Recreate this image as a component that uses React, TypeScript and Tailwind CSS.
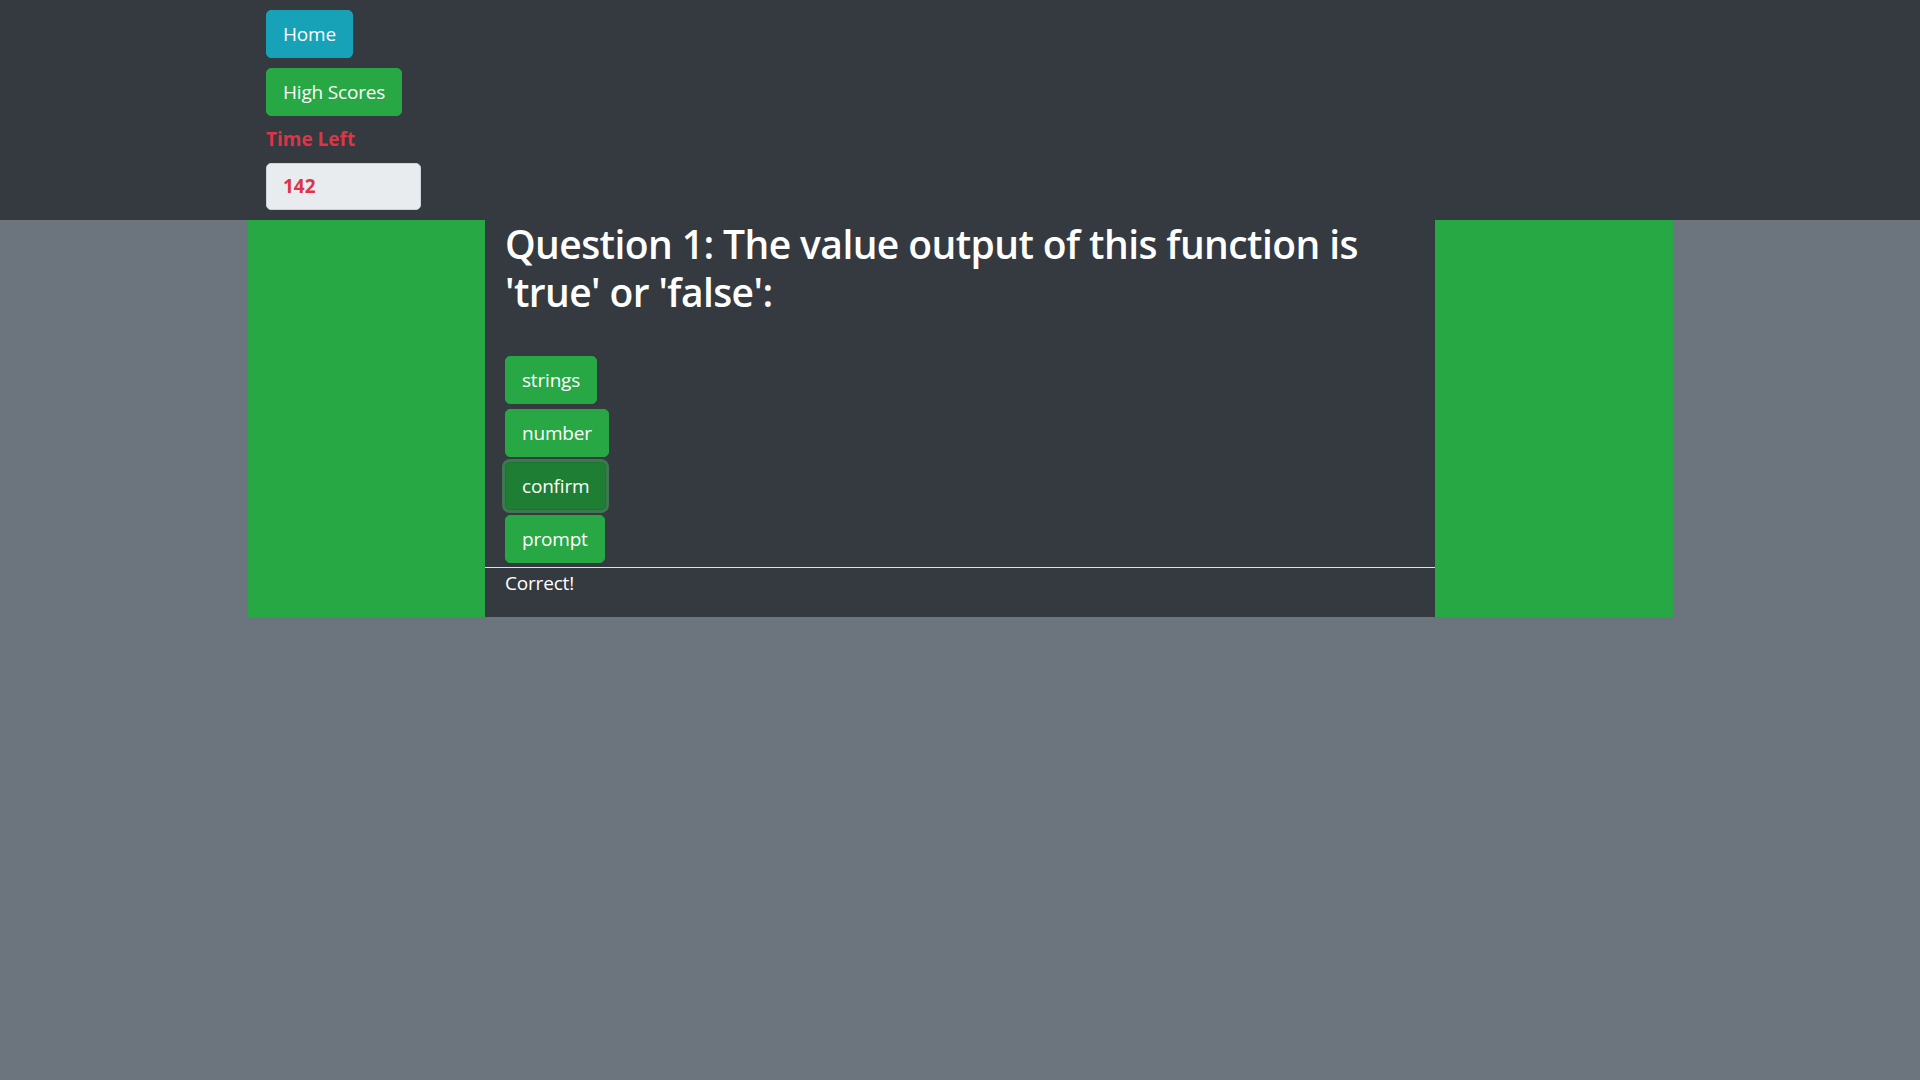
import React from 'react';

const answers = ['strings', 'number', 'confirm', 'prompt'];

const btn = 'rounded-[5px] px-4 py-[8px] text-[19px] leading-[30px] tracking-[-0.01em] text-white';

const App: React.FC = () => {
  const picked = 'confirm';

  return (
    <div className="min-h-screen bg-[#6c757d] text-white font-['Open_Sans','Noto_Sans',sans-serif]">
      <header className="bg-[#343a40] pl-[266px] pt-[10px] pb-[10px] flex flex-col items-start">
        <button className={`${btn} bg-[#17a2b8] border border-[#17a2b8]`}>Home</button>
        <button className={`${btn} mt-[10px] bg-[#28a745] border border-[#28a745]`}>High Scores</button>
        <div className="mt-[8px] text-[19px] leading-[30px] font-bold text-[#dc3545]">Time Left</div>
        <div className="mt-[9px] w-[155px] h-[47px] flex items-center pl-4 bg-[#e9ecef] border border-[#ced4da] rounded-[5px] text-[19px] font-bold text-[#dc3545]">
          142
        </div>
      </header>

      <main className="flex ml-[248px]">
        <div className="w-[237px] bg-[#28a745]" />
        <section className="w-[950px] bg-[#343a40]">
          <div className="px-5">
            <h1 className="text-[39px] leading-[48px] font-semibold tracking-[-0.015em] text-white">
              Question 1: The value output of this function is 'true' or 'false':
            </h1>
            <div className="mt-[40px] flex flex-col items-start gap-[5px]">
              {answers.map((a) =>
                a === picked ? (
                  <button
                    key={a}
                    className={`${btn} bg-[#1e7e34] border border-[#1c7430] shadow-[0_0_0_3px_rgba(72,180,97,0.5)]`}
                  >
                    {a}
                  </button>
                ) : (
                  <button key={a} className={`${btn} bg-[#28a745] border border-[#28a745]`}>
                    {a}
                  </button>
                )
              )}
            </div>
          </div>
          <hr className="mt-[4px] border-0 border-t border-[#dee2e6]" />
          <p className="px-5 pb-[19px] text-[19px] leading-[30px] tracking-[-0.01em]">Correct!</p>
        </section>
        <div className="w-[238px] bg-[#28a745]" />
      </main>
    </div>
  );
};

export default App;
